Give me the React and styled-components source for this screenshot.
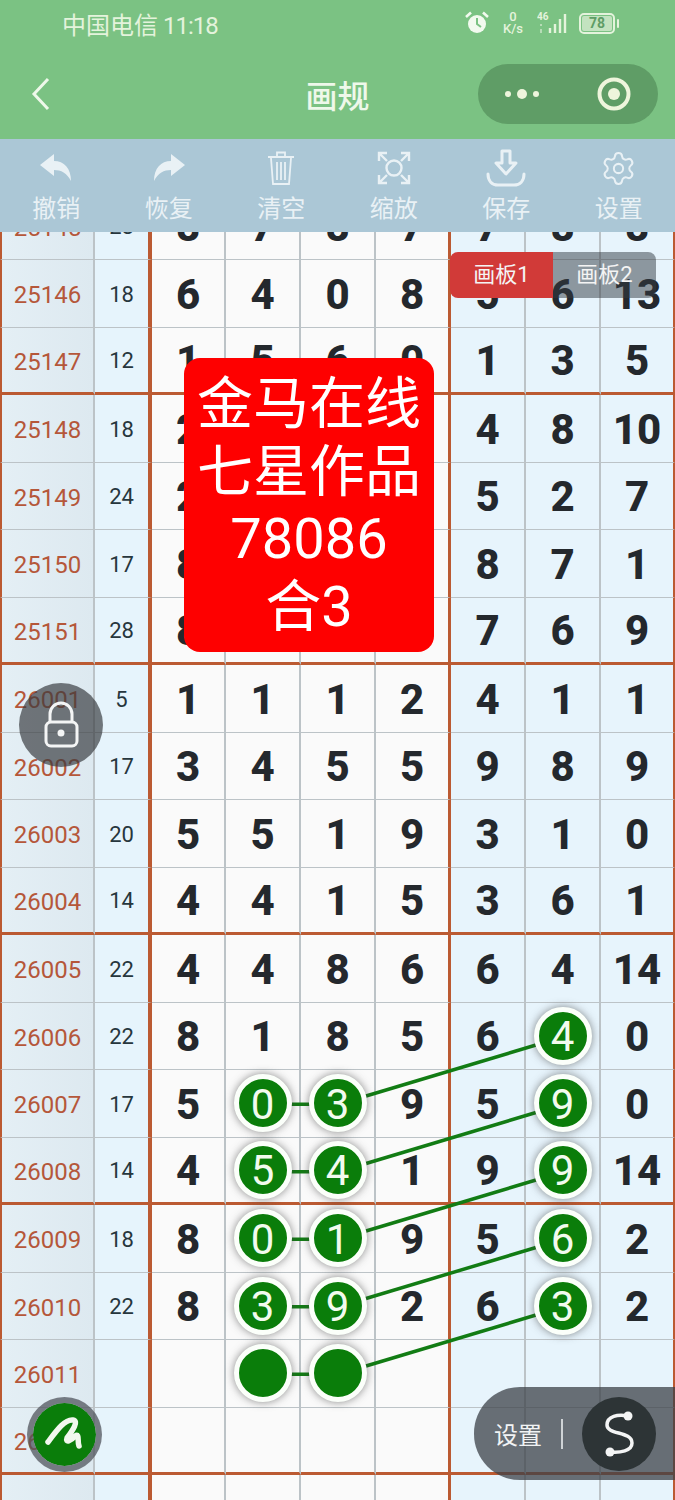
import React from "react";
import styled, { createGlobalStyle } from "styled-components";
import { Settings } from "lucide-react";

const ROW_H = 67.5;
const COL_CENTER = [188.5, 263.5, 338.5, 413, 488.5, 563.5, 638];

// [issue, sum, 7 cells]
const rows = [
  ["25145", "28", [8, 7, 8, 7, 7, 8, 8]],
  ["25146", "18", [6, 4, 0, 8, 5, 6, 13]],
  ["25147", "12", [1, 5, 6, 0, 1, 3, 5]],
  ["25148", "18", [2, "", "", "", 4, 8, 10]],
  ["25149", "24", [2, "", "", "", 5, 2, 7]],
  ["25150", "17", [8, "", "", "", 8, 7, 1]],
  ["25151", "28", [8, "", "", "", 7, 6, 9]],
  ["26001", "5", [1, 1, 1, 2, 4, 1, 1]],
  ["26002", "17", [3, 4, 5, 5, 9, 8, 9]],
  ["26003", "20", [5, 5, 1, 9, 3, 1, 0]],
  ["26004", "14", [4, 4, 1, 5, 3, 6, 1]],
  ["26005", "22", [4, 4, 8, 6, 6, 4, 14]],
  ["26006", "22", [8, 1, 8, 5, 6, 4, 0]],
  ["26007", "17", [5, 0, 3, 9, 5, 9, 0]],
  ["26008", "14", [4, 5, 4, 1, 9, 9, 14]],
  ["26009", "18", [8, 0, 1, 9, 5, 6, 2]],
  ["26010", "22", [8, 3, 9, 2, 6, 3, 2]],
  ["26011", "", ["", "", "", "", "", "", ""]],
  ["26012", "", ["", "", "", "", "", "", ""]],
  ["", "", ["", "", "", "", "", "", ""]],
];

// row index -> marked columns
const marks = {
  12: [5],
  13: [1, 2, 5],
  14: [1, 2, 5],
  15: [1, 2, 5],
  16: [1, 2, 5],
  17: [1, 2],
};

const GlobalStyle = createGlobalStyle`
  html, body {
    margin: 0;
    padding: 0;
    background: #fff;
  }
  body {
    font-family: Roboto, "Noto Sans CJK SC", sans-serif;
  }
`;

const Page = styled.div`
  position: relative;
  width: 675px;
  height: 1500px;
  overflow: hidden;
  display: flex;
  flex-direction: column;
`;

const Header = styled.header`
  background: #7bc283;
  height: 139px;
  flex: none;
`;

const StatusBar = styled.div`
  height: 50px;
  box-sizing: border-box;
  padding: 0 60px 4px 62px;
  display: flex;
  align-items: center;
  color: #e4f3dc;
  font-size: 24px;
`;

const Clock = styled.span`
  margin-left: 5px;
  letter-spacing: -1px;
`;

const StatusIcons = styled.div`
  margin-left: auto;
  display: flex;
  align-items: center;
`;

const Speed = styled.div`
  width: 24px;
  margin: 0 12px;
  text-align: center;
  font-size: 13px;
  font-weight: 500;
  line-height: 12px;
`;

const Battery = styled.div`
  position: relative;
  width: 36px;
  height: 21px;
  margin-left: 8px;
  box-sizing: border-box;
  border: 2px solid #e4f3dc;
  border-radius: 5px;
  font-size: 14px;
  font-weight: 700;
  line-height: 17px;
  text-align: center;
  color: #5f9d66;
  background: #c3e3c0;
  background-clip: content-box;
  padding: 1px;
  &::after {
    content: "";
    position: absolute;
    right: -6px;
    top: 4px;
    width: 2px;
    height: 9px;
    background: #e4f3dc;
    border-radius: 1px;
  }
`;

const BatteryNum = styled.span`
  position: relative;
  top: -1px;
`;

const NavBar = styled.div`
  display: grid;
  grid-template-columns: 1fr auto 1fr;
  align-items: center;
  margin-top: 14px;
  height: 60px;
  padding: 0 17px;
`;

const BackIcon = styled.svg`
  margin-left: 13px;
`;

const Title = styled.h1`
  margin: 0;
  font-size: 32px;
  font-weight: 500;
  color: #eef8ea;
`;

const MenuPill = styled.div`
  justify-self: end;
  width: 180px;
  height: 60px;
  border-radius: 30px;
  background: #5f9d66;
  display: flex;
  align-items: center;
  justify-content: space-between;
  padding: 0 27px 0 26px;
  box-sizing: border-box;
`;

const Toolbar = styled.nav`
  flex: none;
  height: 93px;
  background: #abc7d6;
  display: grid;
  grid-template-columns: repeat(6, 1fr);
`;

const ToolItem = styled.div`
  display: flex;
  flex-direction: column;
  align-items: center;
  color: #e9f1f5;
  font-size: 24px;
  line-height: 30px;
`;

const ToolIcon = styled.div`
  height: 40px;
  margin-top: 9px;
  margin-bottom: 6px;
  display: flex;
  align-items: center;
  justify-content: center;
`;

const GridViewport = styled.div`
  flex: 1;
  overflow: hidden;
`;

const Grid = styled.div`
  position: relative;
  margin-top: -39.5px;
  width: 675px;
  display: grid;
  grid-template-columns: 95px 57px 74px 75px 75px 75px 75px 75px 74px;
  grid-auto-rows: ${ROW_H}px;
`;

const Cell = styled.div`
  box-sizing: border-box;
  padding-top: 2px;
  display: flex;
  align-items: center;
  justify-content: center;
  border-right: ${(p) => p.$right || "2px solid #bcc3c7"};
  border-bottom: ${(p) => (p.$groupEnd ? "3px solid #bb5a32" : "1.5px solid #bcc3c7")};
  background: ${(p) => p.$bg};
`;

const IssueCell = styled(Cell)`
  padding-top: 4px;
  border-left: 2px solid #bb5a32;
  font-size: 24px;
  color: #b5573a;
  background: linear-gradient(90deg, #e4eff5, #dde9f0);
`;

const SumCell = styled(Cell)`
  font-size: 22px;
  color: #27363d;
`;

const NumCell = styled(Cell)`
  font-size: 42px;
  font-weight: 800;
  color: #24282d;
`;

const Ball = styled.div`
  position: relative;
  z-index: 2;
  width: 58px;
  height: 58px;
  flex: none;
  margin-top: -2px;
  padding-top: 2px;
  box-sizing: border-box;
  border: 5px solid #fbfffa;
  border-radius: 50%;
  background: #0a7d0a;
  box-shadow: 0 0 8px rgba(60, 60, 60, 0.6);
  color: #f2fbee;
  font-size: 42px;
  font-weight: 400;
  display: flex;
  align-items: center;
  justify-content: center;
`;

const Links = styled.svg`
  position: absolute;
  left: 0;
  top: 0;
  z-index: 1;
  pointer-events: none;
`;

const BoardTabs = styled.div`
  position: absolute;
  left: 450px;
  top: 252px;
  z-index: 5;
  display: flex;
  height: 46px;
`;

const BoardTab = styled.div`
  width: 103px;
  box-sizing: border-box;
  padding-bottom: 6px;
  display: flex;
  align-items: center;
  justify-content: center;
  font-size: 22px;
  color: #f4f4f4;
  background: ${(p) => (p.$active ? "#d13a38" : "rgba(50, 58, 66, 0.5)")};
  border-radius: ${(p) => (p.$active ? "8px 0 0 8px" : "0 8px 8px 0")};
`;

const Notice = styled.div`
  position: absolute;
  left: 184px;
  top: 358px;
  z-index: 5;
  width: 250px;
  height: 294px;
  padding-top: 13px;
  box-sizing: border-box;
  border-radius: 16px;
  background: #fe0000;
  color: #fff;
  font-size: 56px;
  line-height: 67.5px;
  text-align: center;
`;

const LockButton = styled.div`
  position: absolute;
  left: 19px;
  top: 683px;
  z-index: 5;
  width: 84px;
  height: 84px;
  border-radius: 50%;
  background: rgba(55, 58, 62, 0.68);
`;

const PenButton = styled.div`
  position: absolute;
  left: 27px;
  top: 1397px;
  z-index: 5;
  width: 75px;
  height: 75px;
  box-sizing: border-box;
  border: 6px solid rgba(80, 84, 92, 0.75);
  border-radius: 50%;
  background: #0a7d0a;
  background-clip: padding-box;
`;

const SettingsPill = styled.div`
  position: absolute;
  right: 0;
  top: 1387px;
  z-index: 5;
  width: 201px;
  height: 93px;
  box-sizing: border-box;
  padding: 0 19px 0 20px;
  border-radius: 46px 0 0 46px;
  background: rgba(60, 66, 72, 0.75);
  display: flex;
  align-items: center;
  justify-content: space-between;
  color: #f1f3f4;
  font-size: 24px;
`;

const Divider = styled.span`
  width: 2px;
  height: 30px;
  background: #cfd3d6;
`;

const RoundDark = styled.div`
  width: 74px;
  height: 74px;
  border-radius: 50%;
  background: #2d3436;
`;

const ICON = "#e9f1f5";

const UndoIcon = ({ flip }) => (
  <svg width="34" height="30" viewBox="0 0 34 30" style={flip ? { transform: "scaleX(-1)" } : undefined}>
    <path d="M1 12 L15 1 L15 8 C25 8 32 15 32 28 C28 20 22 17 15 17 L15 23 Z" fill={ICON} />
  </svg>
);

const TrashIcon = () => (
  <svg width="30" height="36" viewBox="0 0 30 36" fill="none" stroke={ICON} strokeWidth="1.8">
    <path d="M2 7 H28 M11 6 V2.5 H19 V6 M5 8 L7 34 H23 L25 8 M11 12 V30 M15 12 V30 M19 12 V30" />
  </svg>
);

const ScanIcon = () => (
  <svg width="34" height="34" viewBox="0 0 34 34" fill="none" stroke={ICON} strokeWidth="2.4">
    <circle cx="17" cy="17" r="7.5" />
    <path d="M2 10 V2 H10 M24 2 H32 V10 M2 24 V32 H10 M24 32 H32 V24 M3 3 L10 10 M31 3 L24 10 M3 31 L10 24 M31 31 L24 24" />
  </svg>
);

const SaveIcon = () => (
  <svg width="40" height="38" viewBox="0 0 40 38" fill="none" stroke={ICON} strokeWidth="3" strokeLinejoin="round" strokeLinecap="round">
    <path d="M16 2 H24 V14 H30 L20 25 L10 14 H16 Z" />
    <path d="M2 25 C2 32 6 36 12 36 H28 C34 36 38 32 38 25" />
  </svg>
);

const AlarmIcon = () => (
  <svg width="24" height="24" viewBox="0 0 24 24">
    <circle cx="12" cy="13" r="9" fill="#f2faef" />
    <path d="M12 7 V13 L16 16" stroke="#7bc283" strokeWidth="2" fill="none" />
    <path d="M1 6 L6 1.5 M23 6 L18 1.5" stroke="#f2faef" strokeWidth="2.6" />
  </svg>
);

const SignalIcon = () => (
  <svg width="34" height="24" viewBox="0 0 34 24">
    <text x="0" y="9" fontSize="10" fontWeight="700" fill="#e4f3dc">46</text>
    <path d="M4 13 V15 M4 18 V22" stroke="#b6dcb6" strokeWidth="2" />
    <path d="M13 17 V22 M18 13 V22 M23 8 V22 M28 3 V22" stroke="#e4f3dc" strokeWidth="2.4" />
  </svg>
);

const tools = [
  ["撤销", <UndoIcon key="i" />],
  ["恢复", <UndoIcon key="i" flip />],
  ["清空", <TrashIcon key="i" />],
  ["缩放", <ScanIcon key="i" />],
  ["保存", <SaveIcon key="i" />],
  ["设置", <Settings key="i" size={37} color={ICON} strokeWidth={1.3} />],
];

const center = (row, col) => [COL_CENTER[col], ROW_H * row + ROW_H / 2];

const linkPairs = [
  [[13, 1], [13, 2]],
  [[14, 1], [14, 2]],
  [[15, 1], [15, 2]],
  [[16, 1], [16, 2]],
  [[17, 1], [17, 2]],
  [[13, 2], [12, 5]],
  [[14, 2], [13, 5]],
  [[15, 2], [14, 5]],
  [[16, 2], [15, 5]],
  [[17, 2], [16, 5]],
];

const cellBg = (i) => (i < 4 ? "#fafafa" : "#e7f4fc");
const cellRight = (i) => {
  if (i === 3) return "3px solid #bb5a32";
  if (i === 6) return "2px solid #bb5a32";
  return undefined;
};

export default function App() {
  return (
    <Page>
      <GlobalStyle />
      <Header>
        <StatusBar>
          <span>
            中国电信<Clock>11:18</Clock>
          </span>
          <StatusIcons>
            <AlarmIcon />
            <Speed>0<br />K/s</Speed>
            <SignalIcon />
            <Battery><BatteryNum>78</BatteryNum></Battery>
          </StatusIcons>
        </StatusBar>
        <NavBar>
          <BackIcon width="22" height="36" viewBox="0 0 22 36" fill="none" stroke="#eef8ea" strokeWidth="3">
            <path d="M18 3 L4 18 L18 33" />
          </BackIcon>
          <Title>画规</Title>
          <MenuPill>
            <svg width="36" height="14" viewBox="0 0 36 14" fill="#eef5dc">
              <circle cx="4" cy="7" r="3" />
              <circle cx="18" cy="7" r="5" />
              <circle cx="32" cy="7" r="3" />
            </svg>
            <svg width="34" height="34" viewBox="0 0 34 34">
              <circle cx="17" cy="17" r="14.5" fill="none" stroke="#eef5dc" strokeWidth="4" />
              <circle cx="17" cy="17" r="6" fill="#eef5dc" />
            </svg>
          </MenuPill>
        </NavBar>
      </Header>

      <Toolbar>
        {tools.map(([label, icon]) => (
          <ToolItem key={label}>
            <ToolIcon>{icon}</ToolIcon>
            {label}
          </ToolItem>
        ))}
      </Toolbar>

      <GridViewport>
        <Grid>
          {rows.map(([issue, sum, cells], r) => {
            const groupEnd = (r + 2) % 4 === 0 && r >= 2;
            return (
              <React.Fragment key={r}>
                <IssueCell $groupEnd={groupEnd}>{issue}</IssueCell>
                <SumCell $groupEnd={groupEnd} $bg="#e6f4fc" $right="4px solid #bb5a32">{sum}</SumCell>
                {cells.map((v, c) => (
                  <NumCell key={c} $groupEnd={groupEnd} $bg={cellBg(c)} $right={cellRight(c)}>
                    {marks[r] && marks[r].includes(c) ? <Ball>{v}</Ball> : v}
                  </NumCell>
                ))}
              </React.Fragment>
            );
          })}
          <Links width="675" height={ROW_H * rows.length}>
            {linkPairs.map(([a, b], i) => {
              const [x1, y1] = center(a[0], a[1]);
              const [x2, y2] = center(b[0], b[1]);
              return <line key={i} x1={x1} y1={y1} x2={x2} y2={y2} stroke="#127c14" strokeWidth="3.5" />;
            })}
          </Links>
        </Grid>
      </GridViewport>

      <BoardTabs>
        <BoardTab $active>画板1</BoardTab>
        <BoardTab>画板2</BoardTab>
      </BoardTabs>

      <Notice>
        金马在线<br />
        七星作品<br />
        78086<br />
        合3
      </Notice>

      <LockButton>
        <svg width="84" height="84" viewBox="0 0 84 84" fill="none" stroke="#f4f5f5" strokeWidth="3">
          <rect x="27" y="39" width="31" height="24" rx="5" />
          <path d="M31 39 V31 a11 11 0 0 1 22 0 V39" />
          <circle cx="42" cy="50" r="3.5" fill="#f4f5f5" stroke="none" />
        </svg>
      </LockButton>

      <PenButton>
        <svg width="63" height="63" viewBox="6 6 63 63" fill="none" stroke="#f2f8ee" strokeWidth="5.5" strokeLinecap="round" strokeLinejoin="round">
          <path d="M21 45 C30 33 38 22 46 23 C52 24 46 33 40 41 C38 46 44 44 48 39 C53 36 50 44 52 49" />
        </svg>
      </PenButton>

      <SettingsPill>
        设置
        <Divider />
        <RoundDark>
          <svg width="74" height="74" viewBox="0 0 74 74" fill="none" stroke="#f4f5f5" strokeWidth="3.5" strokeLinecap="round">
            <path d="M46 19 C36 17 25 19 25 28 C25 38 50 34 50 46 C50 54 38 56 28 55" />
            <circle cx="46" cy="19" r="4.5" fill="#f4f5f5" stroke="none" />
            <circle cx="28" cy="55" r="4.5" fill="#f4f5f5" stroke="none" />
          </svg>
        </RoundDark>
      </SettingsPill>
    </Page>
  );
}
